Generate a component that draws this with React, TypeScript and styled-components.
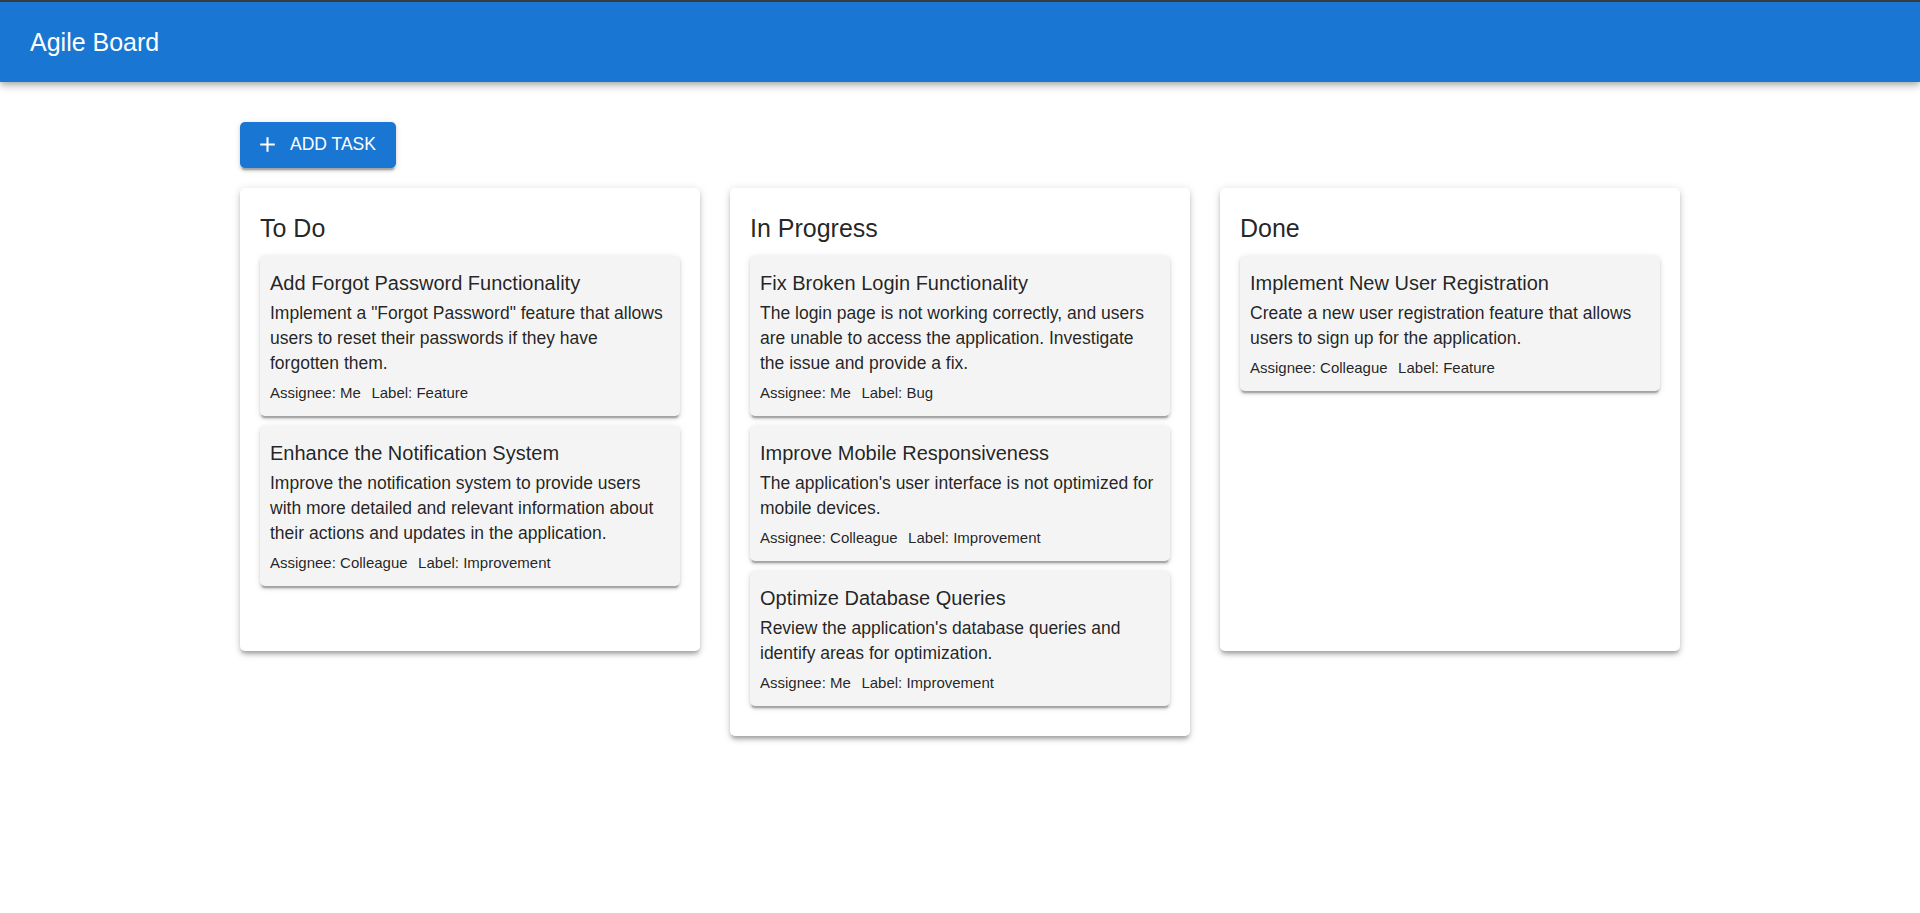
import React from 'react';
import styled, {createGlobalStyle} from "styled-components";

const GlobalStyle = createGlobalStyle`
    body {
      margin: 0;
      background: #fff;
      font-family: "Liberation Sans", Arial, sans-serif;
      color: rgba(0, 0, 0, 0.87);
    }
`

const Header = styled.header`
    border-top: 2px solid #353b40;
    height: 80px;
    background-color: #1976d2;
    color: #fff;
    display: flex;
    align-items: center;
    padding: 0 30px;
    box-shadow: 0px 2.5px 5px -1.25px rgba(0,0,0,0.2), 0px 5px 6.25px 0px rgba(0,0,0,0.14), 0px 1.25px 12.5px 0px rgba(0,0,0,0.12);
    position: relative;
    z-index: 2;
`

const AppTitle = styled.div`
    font-size: 25px;
    line-height: 40px;
    font-weight: 400;
`

const Main = styled.main`
    max-width: 1440px;
    margin: 0 auto;
    padding: 40px 30px;
`

const AddButton = styled.button`
    display: inline-flex;
    align-items: center;
    height: 45.6px;
    padding: 0 20px 0 15px;
    border: none;
    border-radius: 5px;
    background-color: #1976d2;
    color: #fff;
    font-family: "Liberation Sans", Arial, sans-serif;
    font-size: 17.5px;
    font-weight: 500;
    letter-spacing: 0;
    text-transform: uppercase;
    cursor: pointer;
    box-shadow: 0px 3.75px 1.25px -2.5px rgba(0,0,0,0.2), 0px 2.5px 2.5px 0px rgba(0,0,0,0.14), 0px 1.25px 6.25px 0px rgba(0,0,0,0.12);
    svg {
      width: 25px;
      height: 25px;
      margin-right: 10px;
      fill: currentColor;
    }
`

const Board = styled.div`
    margin-top: 20px;
    display: grid;
    grid-template-columns: repeat(3, 1fr);
    gap: 30px;
    align-items: start;
`

const Column = styled.section`
    background: #fff;
    border-radius: 5px;
    padding: 20px;
    box-shadow: 0px 3.75px 3.75px -2.5px rgba(0,0,0,0.2), 0px 3.75px 5px 0px rgba(0,0,0,0.14), 0px 1.25px 10px 0px rgba(0,0,0,0.12);
`

const ColumnTitle = styled.h2`
    margin: 0 0 8.75px;
    font-size: 25px;
    line-height: 40px;
    font-weight: 400;
`

const TaskList = styled.div`
    min-height: 375px;
`

const TaskCard = styled.div`
    background: #f4f4f4;
    border-radius: 5px;
    padding: 10px;
    margin-bottom: 10px;
    box-shadow: 0px 3.75px 1.25px -2.5px rgba(0,0,0,0.2), 0px 2.5px 2.5px 0px rgba(0,0,0,0.14), 0px 1.25px 6.25px 0px rgba(0,0,0,0.12);
`

const TaskTitle = styled.div`
    font-size: 20px;
    line-height: 35px;
`

const TaskDescription = styled.div`
    font-size: 17.5px;
    line-height: 25px;
`

const TaskMeta = styled.div`
    margin-top: 4px;
    display: flex;
    gap: 10.5px;
    font-size: 15px;
    line-height: 26px;
`

interface Task {
    title: string
    description: string
    assignee: string
    label: string
}

interface ColumnData {
    name: string
    tasks: Task[]
}

const columns: ColumnData[] = [
    {
        name: 'To Do',
        tasks: [
            {
                title: 'Add Forgot Password Functionality',
                description: 'Implement a "Forgot Password" feature that allows users to reset their passwords if they have forgotten them.',
                assignee: 'Me',
                label: 'Feature'
            },
            {
                title: 'Enhance the Notification System',
                description: 'Improve the notification system to provide users with more detailed and relevant information about their actions and updates in the application.',
                assignee: 'Colleague',
                label: 'Improvement'
            }
        ]
    },
    {
        name: 'In Progress',
        tasks: [
            {
                title: 'Fix Broken Login Functionality',
                description: 'The login page is not working correctly, and users are unable to access the application. Investigate the issue and provide a fix.',
                assignee: 'Me',
                label: 'Bug'
            },
            {
                title: 'Improve Mobile Responsiveness',
                description: "The application's user interface is not optimized for mobile devices.",
                assignee: 'Colleague',
                label: 'Improvement'
            },
            {
                title: 'Optimize Database Queries',
                description: "Review the application's database queries and identify areas for optimization.",
                assignee: 'Me',
                label: 'Improvement'
            }
        ]
    },
    {
        name: 'Done',
        tasks: [
            {
                title: 'Implement New User Registration',
                description: 'Create a new user registration feature that allows users to sign up for the application.',
                assignee: 'Colleague',
                label: 'Feature'
            }
        ]
    }
]

const AddIcon = () => <svg viewBox="0 0 24 24">
    <path d="M19 13h-6v6h-2v-6H5v-2h6V5h2v6h6v2z"/>
</svg>

export default function App() {
    return <>
        <GlobalStyle/>
        <Header>
            <AppTitle>Agile Board</AppTitle>
        </Header>
        <Main>
            <AddButton><AddIcon/>Add Task</AddButton>
            <Board>
                {columns.map(col => <Column key={col.name}>
                    <ColumnTitle>{col.name}</ColumnTitle>
                    <TaskList>
                        {col.tasks.map(task => <TaskCard key={task.title}>
                            <TaskTitle>{task.title}</TaskTitle>
                            <TaskDescription>{task.description}</TaskDescription>
                            <TaskMeta>
                                <span>Assignee: {task.assignee}</span>
                                <span>Label: {task.label}</span>
                            </TaskMeta>
                        </TaskCard>)}
                    </TaskList>
                </Column>)}
            </Board>
        </Main>
    </>
}
